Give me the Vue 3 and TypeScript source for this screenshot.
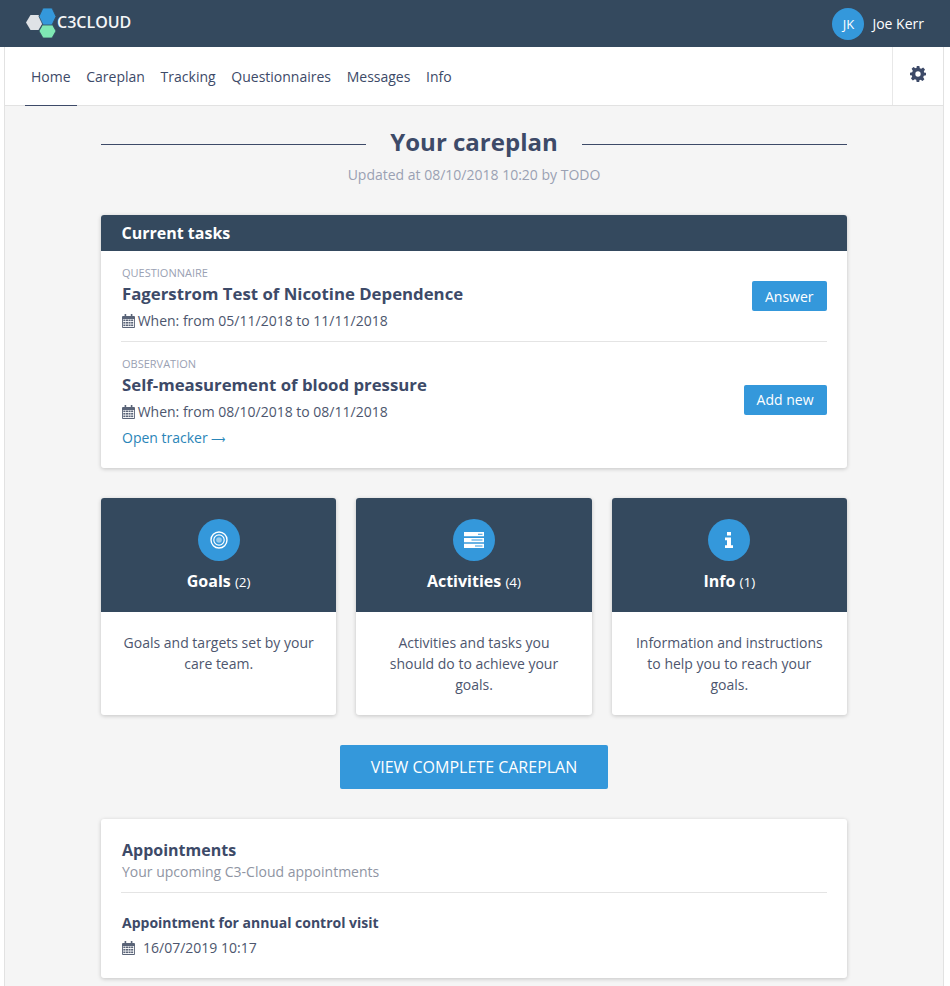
<template>
  <div class="page">
    <svg class="defs" width="0" height="0">
      <symbol id="cal" viewBox="0 0 13 14">
        <path fill="#5a6478" fill-rule="evenodd" d="M2.6 0h1.6v2h4.6V0h1.6v2H12a1 1 0 0 1 1 1v10a1 1 0 0 1-1 1H1a1 1 0 0 1-1-1V3a1 1 0 0 1 1-1h1.6zM.9 5v8.1h11.2V5z" />
        <rect v-for="c in calCells" :key="c.key" :x="c.x" :y="c.y" width="2.1" height="1.6" fill="#5a6478" />
      </symbol>
    </svg>

    <header class="topbar">
      <div class="logo">
        <svg width="32" height="32" viewBox="0 0 32 32" class="logo-mark">
          <polygon points="0,15.5 4.5,8 12.5,8 17,15.5 12.5,23 4.5,23" fill="#dfe2e6" />
          <polygon points="13,24 17,17 26,17 30,24 26,31 17,31" fill="#7fe8b4" stroke="#34495e" stroke-width=".8" />
          <polygon points="13,9.5 17,1 26,1 30,9.5 26,18 17,18" fill="#3498db" stroke="#34495e" stroke-width=".8" />
        </svg>
        <span class="logo-text">C3CLOUD</span>
      </div>
      <div class="user">
        <span class="avatar">JK</span>
        <span class="user-name">Joe Kerr</span>
      </div>
    </header>

    <div class="shell">
      <nav class="nav">
        <div class="nav-links">
          <a v-for="(item, i) in navItems" :key="item" class="nav-link" :class="{ active: i === 0 }">{{ item }}</a>
        </div>
        <div class="nav-gear">
          <svg width="16" height="16" viewBox="0 0 24 24">
            <path fill="#3d4a68" fill-rule="evenodd" d="M10 0h4l.7 3.3 2.1.9 2.9-1.8 2.8 2.8-1.8 2.9.9 2.1L24 10v4l-3.3.7-.9 2.1 1.8 2.9-2.8 2.8-2.9-1.8-2.1.9L14 24h-4l-.7-3.3-2.1-.9-2.9 1.8-2.8-2.8 1.8-2.9-.9-2.1L0 14v-4l3.3-.7.9-2.1-1.8-2.9 2.8-2.8 2.9 1.8 2.1-.9zM12 8a4 4 0 1 0 0 8 4 4 0 0 0 0-8z" />
          </svg>
        </div>
      </nav>

      <main class="main">
        <div class="title-row">
          <span class="title-line"></span>
          <h1>Your careplan</h1>
          <span class="title-line"></span>
        </div>
        <p class="updated">Updated at 08/10/2018 10:20 by TODO</p>

        <section class="card tasks">
          <h2 class="tasks-head">Current tasks</h2>
          <div class="tasks-body">
            <div v-for="task in tasks" :key="task.title" class="task">
              <div class="task-info">
                <div class="task-type">{{ task.type }}</div>
                <div class="task-title">{{ task.title }}</div>
                <div class="task-when">
                  <svg class="cal" width="13" height="14"><use href="#cal" /></svg>
                  When: from {{ task.when }}
                </div>
                <a v-if="task.tracker" class="tracker">Open tracker <span class="arrow">⟶</span></a>
              </div>
              <button class="btn">{{ task.action }}</button>
            </div>
          </div>
        </section>

        <div class="tiles">
          <section v-for="tile in tiles" :key="tile.name" class="card tile">
            <div class="tile-head">
              <span class="tile-icon">
                <svg v-if="tile.icon === 'goals'" width="20" height="20" viewBox="0 0 20 20" fill="none" stroke="#fff">
                  <circle cx="10" cy="10" r="8" stroke-width="1.4" />
                  <circle cx="10" cy="10" r="5.2" stroke-width="1.2" />
                  <circle cx="10" cy="10" r="2.8" fill="#fff" fill-opacity=".5" stroke="none" />
                </svg>
                <svg v-else-if="tile.icon === 'activities'" width="20" height="16" viewBox="0 0 20 16">
                  <path fill="#fff" d="M0 0h20v4.3H0zM0 5.9h20v4.3H0zM0 11.7h20V16H0z" />
                  <path fill="#3498db" d="M14 1.7h4.5v1H14zM7.5 7.6h11v1h-11zM11 13.4h7.5v1H11z" />
                </svg>
                <svg v-else width="10" height="16" viewBox="0 0 10 16">
                  <path fill="#fff" d="M3 0h4v3.6H3zM1 5.4h6v7.8h2V16H1v-2.8h2V8.2H1z" />
                </svg>
              </span>
              <div class="tile-name">{{ tile.name }} <small>({{ tile.count }})</small></div>
            </div>
            <p class="tile-text">{{ tile.text }}</p>
          </section>
        </div>

        <div class="cta-row">
          <button class="btn cta">VIEW COMPLETE CAREPLAN</button>
        </div>

        <section class="card appts">
          <h2>Appointments</h2>
          <div class="appts-sub">Your upcoming C3-Cloud appointments</div>
          <div class="appt">
            <div class="appt-title">Appointment for annual control visit</div>
            <div class="appt-when">
              <svg class="cal" width="13" height="14"><use href="#cal" /></svg>
              16/07/2019 10:17
            </div>
          </div>
        </section>
      </main>
    </div>
  </div>
</template>

<script setup lang="ts">
interface Task {
  type: string
  title: string
  when: string
  action: string
  tracker?: boolean
}

interface Tile {
  name: string
  count: number
  icon: 'goals' | 'activities' | 'info'
  text: string
}

const navItems: string[] = ['Home', 'Careplan', 'Tracking', 'Questionnaires', 'Messages', 'Info']

const tasks: Task[] = [
  { type: 'QUESTIONNAIRE', title: 'Fagerstrom Test of Nicotine Dependence', when: '05/11/2018 to 11/11/2018', action: 'Answer' },
  { type: 'OBSERVATION', title: 'Self-measurement of blood pressure', when: '08/10/2018 to 08/11/2018', action: 'Add new', tracker: true },
]

const tiles: Tile[] = [
  { name: 'Goals', count: 2, icon: 'goals', text: 'Goals and targets set by your care team.' },
  { name: 'Activities', count: 4, icon: 'activities', text: 'Activities and tasks you should do to achieve your goals.' },
  { name: 'Info', count: 1, icon: 'info', text: 'Information and instructions to help you to reach your goals.' },
]

// small squares of the calendar icon, 4 columns by 3 rows
const calCells = [0, 1, 2].flatMap((row) =>
  [0, 1, 2, 3].map((col) => ({ key: `${row}-${col}`, x: 1.3 + col * 2.6, y: 5.5 + row * 2.5 })),
)
</script>

<style>
html,
body {
  margin: 0;
  background: #fff;
}
</style>

<style scoped>
.defs {
  position: absolute;
}

.page {
  height: 986px;
  overflow: hidden;
  display: flex;
  flex-direction: column;
  font-family: "Open Sans", "Noto Sans", sans-serif;
  font-size: 14px;
  color: #3d4a68;
}

.topbar {
  flex: none;
  height: 47px;
  background: #34495e;
  display: flex;
  align-items: center;
  justify-content: space-between;
  padding: 0 26px;
}

.logo {
  display: flex;
  align-items: center;
  margin-top: -1px;
}

.logo-mark {
  margin-right: -1px;
}

.logo-text {
  color: #f4f6f7;
  font-size: 16px;
  font-weight: 600;
  margin-top: -2px;
}

.user {
  display: flex;
  align-items: center;
  gap: 8px;
  color: #fff;
}

.avatar {
  width: 32px;
  height: 32px;
  border-radius: 50%;
  background: #3498db;
  display: flex;
  align-items: center;
  justify-content: center;
  font-size: 13px;
}

.shell {
  flex: 1;
  margin: 0 6px 0 4px;
  border-left: 1px solid #e2e2e2;
  border-right: 1px solid #e2e2e2;
  background: #f5f5f5;
}

.nav {
  height: 58px;
  background: #fff;
  border-bottom: 1px solid #e2e2e2;
  display: flex;
  justify-content: space-between;
}

.nav-links {
  display: flex;
  padding-left: 20px;
}

.nav-link {
  padding: 0 6px;
  margin-right: 3.7px;
  line-height: 60px;
  height: 58px;
  color: #3d4a68;
}

.nav-link.active {
  border-bottom: 1px solid #3d4a68;
}

.nav-gear {
  width: 51px;
  border-left: 1px solid #e8e8e8;
  display: flex;
  justify-content: center;
  padding-top: 19px;
  padding-right: 1px;
  box-sizing: border-box;
}

.main {
  width: 746px;
  margin: 0 auto;
}

.title-row {
  display: flex;
  align-items: center;
  gap: 24px;
  padding-top: 21px;
}

.title-line {
  flex: 1;
  height: 1px;
  background: #3d4a68;
}

.title-row h1 {
  margin: -2px 0 2px;
  font-size: 24px;
  line-height: 34px;
  font-weight: 700;
  color: #3d4a68;
}

.updated {
  margin: 4px 0 0;
  text-align: center;
  line-height: 20px;
  color: #9aa1b3;
}

.card {
  background: #fff;
  border-radius: 3px;
  box-shadow: 0 1px 4px rgba(0, 0, 0, 0.2);
}

.tasks {
  margin-top: 30px;
  overflow: hidden;
}

.tasks-head {
  margin: 0;
  height: 36px;
  padding: 0 20.5px;
  background: #34495e;
  color: #fff;
  font-size: 16px;
  font-weight: 700;
  line-height: 36px;
}

.tasks-body {
  padding: 0 20px;
}

.task {
  display: flex;
  align-items: center;
  justify-content: space-between;
}

.task + .task {
  border-top: 1px solid #e4e4e4;
}

.task-info {
  padding: 14px 0 6px 1px;
}

.task + .task .task-info {
  padding-bottom: 16px;
}

.task + .task .btn {
  margin-bottom: 11px;
}

.task-type {
  font-size: 11px;
  line-height: 16px;
  color: #9aa1b3;
}

.task-title {
  font-size: 16.8px;
  font-weight: 700;
  line-height: 26px;
  color: #3d4a68;
}

.task-when {
  line-height: 28px;
  color: #4d566e;
}

.task-when .cal {
  margin-right: -1px;
}

.cal {
  vertical-align: -2px;
}

.tracker {
  display: block;
  line-height: 24px;
  color: #2a85b8;
}

.arrow {
  font-size: 9.5px;
}

.btn {
  border: none;
  border-radius: 2px;
  background: #3498db;
  color: #fff;
  font-family: inherit;
  font-size: 14px;
  height: 30px;
  padding: 0 13.5px 0 12.5px;
}

.tiles {
  display: grid;
  grid-template-columns: repeat(3, 1fr);
  gap: 20px;
  margin-top: 30px;
}

.tile {
  height: 217px;
  overflow: hidden;
}

.tile-head {
  height: 114px;
  background: #34495e;
  display: flex;
  flex-direction: column;
  align-items: center;
  padding-top: 21px;
  box-sizing: border-box;
}

.tile-icon {
  width: 42px;
  height: 42px;
  border-radius: 50%;
  background: #3498db;
  display: flex;
  align-items: center;
  justify-content: center;
}

.tile-name {
  margin-top: 7px;
  color: #fff;
  font-size: 16px;
  font-weight: 700;
  line-height: 26px;
}

.tile-name small {
  font-size: 13.5px;
  font-weight: 400;
}

.tile-text {
  margin: 20px 20px 0;
  text-align: center;
  line-height: 21px;
  color: #4d566e;
}

.cta-row {
  display: flex;
  justify-content: center;
  margin-top: 30px;
}

.cta {
  width: 268px;
  height: 44px;
  padding: 0;
  font-size: 16px;
}

.appts {
  margin-top: 30px;
  padding: 20px 20px 0;
  height: 159px;
  box-sizing: border-box;
}

.appts h2 {
  margin: 0;
  padding-left: 1px;
  font-size: 16px;
  font-weight: 700;
  line-height: 22px;
  color: #3d4a68;
}

.appts-sub {
  padding-left: 1px;
  line-height: 22px;
  color: #8f95a3;
}

.appt {
  margin-top: 9px;
  border-top: 1px solid #e4e4e4;
  padding-top: 19px;
}

.appt-title {
  padding-left: 1px;
  font-weight: 700;
  line-height: 22px;
  color: #3d4a68;
}

.appt-when {
  display: flex;
  align-items: center;
  gap: 8px;
  margin-top: 3px;
  padding-left: 1px;
  line-height: 22px;
  color: #4d566e;
}
</style>
